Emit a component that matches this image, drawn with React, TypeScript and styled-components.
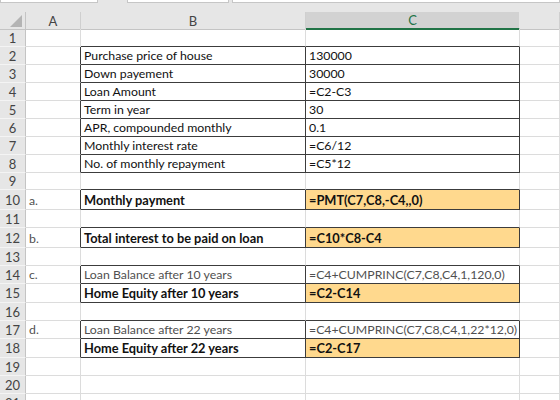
import { FC } from 'react'
import styled, { createGlobalStyle } from 'styled-components'

const GlobalStyle = createGlobalStyle`
  html, body {
    margin: 0;
    padding: 0;
    background: #ffffff;
    overflow: hidden;
  }
  body {
    font-family: Lato, 'Liberation Sans', sans-serif;
  }
`

const COLS = '26px 55px 225px 214px 1fr'
const GRID = '#dcdcdc'
const DARK = '#3c3c3c'
const FILL = '#ffd98e'

type RowData = {
  n: number
  h: number
  a?: string
  b?: string
  c?: string
  bold?: boolean
  muted?: boolean
  fill?: boolean
}

const rows: RowData[] = [
  { n: 1, h: 18 },
  { n: 2, h: 18, b: 'Purchase price of house', c: '130000' },
  { n: 3, h: 18, b: 'Down payement', c: '30000' },
  { n: 4, h: 18, b: 'Loan Amount', c: '=C2-C3' },
  { n: 5, h: 18, b: 'Term in year', c: '30' },
  { n: 6, h: 18, b: 'APR, compounded monthly', c: '0.1' },
  { n: 7, h: 18, b: 'Monthly interest rate', c: '=C6/12' },
  { n: 8, h: 18, b: 'No. of monthly repayment', c: '=C5*12' },
  { n: 9, h: 17 },
  { n: 10, h: 20, a: 'a.', b: 'Monthly payment', c: '=PMT(C7,C8,-C4,,0)', bold: true, fill: true },
  { n: 11, h: 18 },
  { n: 12, h: 20, a: 'b.', b: 'Total interest to be paid on loan', c: '=C10*C8-C4', bold: true, fill: true },
  { n: 13, h: 18 },
  { n: 14, h: 18, a: 'c.', b: 'Loan Balance after 10 years', c: '=C4+CUMPRINC(C7,C8,C4,1,120,0)', muted: true },
  { n: 15, h: 19, b: 'Home Equity after 10 years', c: '=C2-C14', bold: true, fill: true },
  { n: 16, h: 18 },
  { n: 17, h: 18, a: 'd.', b: 'Loan Balance after 22 years', c: '=C4+CUMPRINC(C7,C8,C4,1,22*12,0)', muted: true },
  { n: 18, h: 19, b: 'Home Equity after 22 years', c: '=C2-C17', bold: true, fill: true },
  { n: 19, h: 18 },
  { n: 20, h: 18 },
  { n: 21, h: 18 },
]

const Sheet = styled.div`
  width: 560px;
  height: 400px;
  overflow: hidden;
  background: #ffffff;
`

const TopStrip = styled.div`
  height: 12px;
  background: #e6e6e6;
  display: flex;
  align-items: flex-start;
`

const BarBox = styled.div<{ $width: string; $gap?: number }>`
  box-sizing: border-box;
  height: 3px;
  flex: ${p => p.$width};
  margin-left: ${p => p.$gap ?? 0}px;
  background: #ffffff;
  border: 1px solid #c6c6c6;
  border-top: none;
`

const HeaderRow = styled.div`
  display: grid;
  grid-template-columns: ${COLS};
  height: 17px;
  background: #e6e6e6;
`

const Corner = styled.div`
  position: relative;
  box-sizing: border-box;
  border-right: 1px solid #c4c4c4;
  border-bottom: 1px solid #c4c4c4;
`

const CornerMark = styled.svg`
  position: absolute;
  left: 10px;
  top: 3px;
`

const ColHead = styled.div<{ $active?: boolean }>`
  box-sizing: border-box;
  display: flex;
  align-items: center;
  justify-content: center;
  font-size: 13px;
  color: ${p => (p.$active ? '#217346' : '#444444')};
  background: ${p => (p.$active ? '#d2d2d2' : 'transparent')};
  border-right: 1px solid ${p => (p.$active ? '#e6e6e6' : '#cfcfcf')};
  border-bottom: ${p => (p.$active ? '2px solid #217346' : '1px solid #c4c4c4')};
`

const Row = styled.div<{ $h: number }>`
  display: grid;
  grid-template-columns: ${COLS};
  height: ${p => p.$h}px;
`

const RowHead = styled.div`
  box-sizing: border-box;
  display: flex;
  align-items: center;
  justify-content: center;
  background: #e6e6e6;
  color: #444444;
  font-size: 13px;
  border-right: 1px solid #c4c4c4;
  border-bottom: 1px solid #f4f4f4;
`

const Cell = styled.div<{
  $right: string
  $bottom: string
  $bold?: boolean
  $muted?: boolean
  $fill?: boolean
}>`
  box-sizing: border-box;
  display: flex;
  align-items: flex-end;
  padding: 0 0 1px 3px;
  min-width: 0;
  overflow: hidden;
  white-space: nowrap;
  font-size: ${p => (p.$bold ? 12.8 : 12.3)}px;
  font-weight: ${p => (p.$bold ? 700 : 400)};
  color: ${p => (p.$muted ? '#505050' : '#111111')};
  background: ${p => (p.$fill ? FILL : 'transparent')};
  border-right: 1px solid ${p => p.$right};
  border-bottom: 1px solid ${p => p.$bottom};
`

const boxed = (i: number) => !!rows[i]?.b

const App: FC = () => (
  <Sheet>
    <GlobalStyle />
    <TopStrip>
      <BarBox $width="0 0 98px" />
      <BarBox $width="0 0 102px" $gap={29} />
      <BarBox $width="1 1 auto" $gap={3} />
    </TopStrip>
    <HeaderRow>
      <Corner>
        <CornerMark width="12" height="12" viewBox="0 0 12 12">
          <polygon points="12,0 12,12 0,12" fill="#b4b4b4" />
        </CornerMark>
      </Corner>
      <ColHead>A</ColHead>
      <ColHead>B</ColHead>
      <ColHead $active>C</ColHead>
      <ColHead />
    </HeaderRow>
    {rows.map((r, i) => {
      const box = boxed(i)
      const below = box || boxed(i + 1)
      return (
        <Row key={r.n} $h={r.h}>
          <RowHead>{r.n}</RowHead>
          <Cell $right={box ? DARK : GRID} $bottom={GRID} $muted>
            {r.a}
          </Cell>
          <Cell $right={box ? DARK : GRID} $bottom={below ? DARK : GRID} $bold={r.bold} $muted={r.muted}>
            {r.b}
          </Cell>
          <Cell
            $right={box ? DARK : GRID}
            $bottom={below ? DARK : GRID}
            $bold={r.bold}
            $muted={r.muted}
            $fill={r.fill}
          >
            {r.c}
          </Cell>
          <Cell $right={GRID} $bottom={GRID} />
        </Row>
      )
    })}
  </Sheet>
)

export default App
